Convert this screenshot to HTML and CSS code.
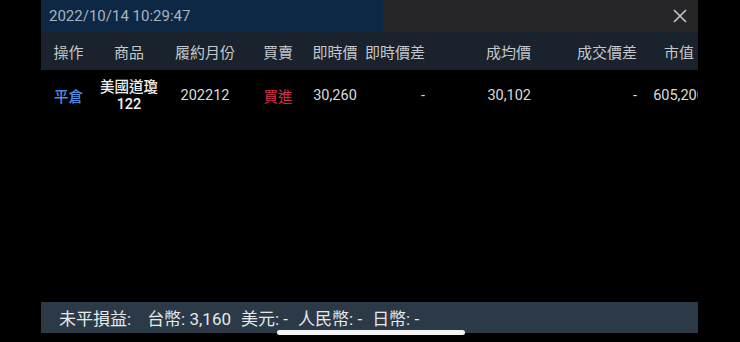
FILE: index.html
```html
<!DOCTYPE html>
<html lang="zh-Hant">
<head>
<meta charset="utf-8">
<link rel="stylesheet" href="styles.css">
</head>
<body>
<div class="screen">
  <div class="panel">
    <div class="topbar">
      <div class="stamp">2022/10/14 10:29:47</div>
      <div class="closearea">
        <svg class="close" width="16" height="16" viewBox="0 0 16 16"><path d="M2 2 L14 14 M14 2 L2 14" stroke="#c4c4c4" stroke-width="1.7" fill="none"/></svg>
      </div>
    </div>
    <div class="row head">
      <div class="c c1">操作</div>
      <div class="c c2">商品</div>
      <div class="c c3">履約月份</div>
      <div class="c c4">買賣</div>
      <div class="c c5">即時價</div>
      <div class="c c6">即時價差</div>
      <div class="c c7">成均價</div>
      <div class="c c8">成交價差</div>
      <div class="c c9">市值</div>
    </div>
    <div class="row data">
      <div class="c c1 action">平倉</div>
      <div class="c c2 product">美國道瓊<br>122</div>
      <div class="c c3">202212</div>
      <div class="c c4 buy">買進</div>
      <div class="c c5">30,260</div>
      <div class="c c6">-</div>
      <div class="c c7">30,102</div>
      <div class="c c8">-</div>
      <div class="c c9">605,200</div>
    </div>
    <div class="body"></div>
    <div class="footer">
      <span class="lead">未平損益:</span>
      <span>台幣: 3,160</span>
      <span>美元: -</span>
      <span>人民幣: -</span>
      <span>日幣: -</span>
    </div>
  </div>
  <div class="homebar"></div>
</div>
</body>
</html>
```
FILE: styles.css
```css
html, body {
  margin: 0;
  padding: 0;
  background: #000;
}
body {
  font-family: Roboto, "Noto Sans CJK TC", "Noto Sans", sans-serif;
  width: 740px;
  height: 342px;
  overflow: hidden;
}
.screen {
  position: relative;
  width: 740px;
  height: 342px;
}
.panel {
  margin-left: 41px;
  width: 657px;
  height: 333px;
  display: flex;
  flex-direction: column;
  overflow: hidden;
  background: #000;
}
.topbar {
  height: 32px;
  display: flex;
  flex: none;
}
.stamp {
  width: 334px;
  padding-left: 8px;
  background: #0c2845;
  color: #a9b3be;
  font-size: 15px;
  line-height: 32px;
}
.closearea {
  flex: 1;
  background: #262628;
  display: flex;
  align-items: center;
  justify-content: flex-end;
  padding-right: 10px;
}
.close {
  display: block;
}
.row {
  display: flex;
  flex: none;
  white-space: nowrap;
}
.head {
  height: 38px;
  background: #19222d;
  color: #c4c8cc;
  font-size: 15px;
  align-items: center;
}
.data {
  height: 50px;
  color: #dcdcdc;
  font-size: 14.5px;
  align-items: center;
}
.c {
  flex: none;
  box-sizing: border-box;
}
.c1 { width: 55px; text-align: center; }
.c2 { width: 66px; text-align: center; }
.c3 { width: 86px; text-align: center; }
.c4 { width: 60px; text-align: center; }
.c5 { width: 54px; text-align: center; }
.c6 { width: 66px; text-align: right; padding-right: 3px; }
.c7 { width: 106px; text-align: right; padding-right: 3px; }
.c8 { width: 106px; text-align: right; padding-right: 3px; }
.c9 { width: 78px; text-align: center; }
.action {
  color: #4a8fe0;
  font-weight: 500;
}
.product {
  color: #f2f2f2;
  font-weight: 500;
  line-height: 17px;
  padding-top: 2px;
}
.buy {
  color: #d8304e;
}
.body {
  flex: 1;
}
.footer {
  height: 31px;
  flex: none;
  background: #2c3a48;
  color: #e6e8ea;
  font-size: 17px;
  display: flex;
  align-items: center;
  gap: 10px;
  padding-left: 18px;
  white-space: nowrap;
}
.footer .lead {
  margin-right: 6px;
}
.homebar {
  position: absolute;
  left: 277px;
  top: 330px;
  width: 188px;
  height: 5px;
  border-radius: 3px;
  background: #f4f4f4;
}
```
